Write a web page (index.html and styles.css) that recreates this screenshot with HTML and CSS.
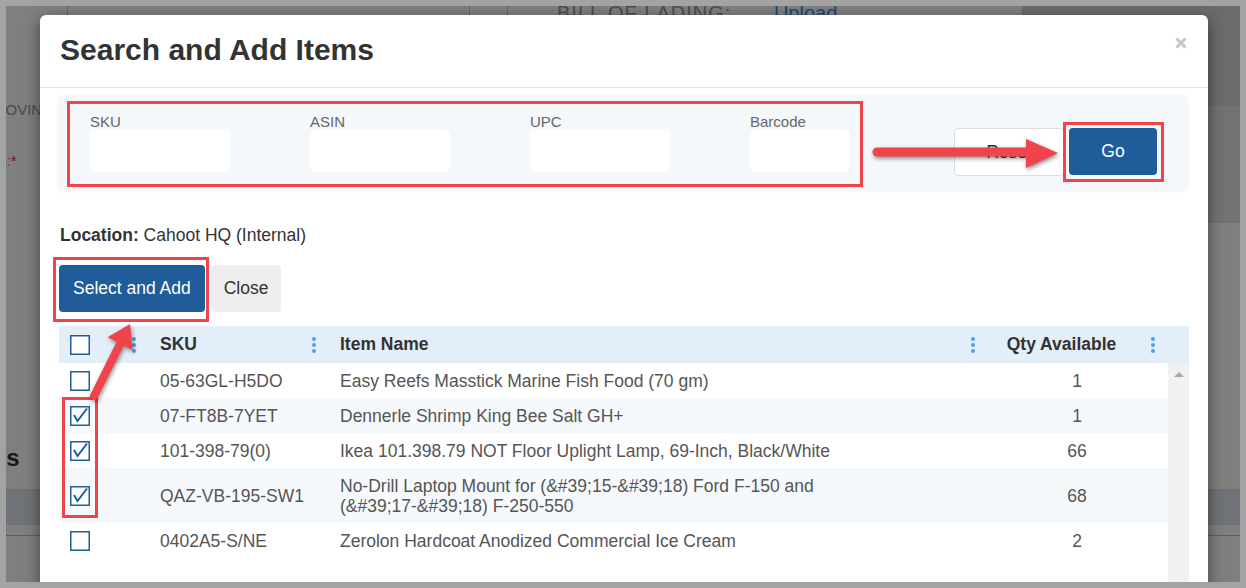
FILE: index.html
```html
<!DOCTYPE html>
<html lang="en">
<head>
    <meta charset="UTF-8">
    <title>Search and Add Items</title>
    <link rel="stylesheet" href="styles.css">
</head>
<body>
    <div class="screen">
        <!-- page behind the dialog -->
        <div class="page">
            <div class="page-top">
                <div class="page-cell w62"></div>
                <div class="page-cell w402"></div>
                <div class="page-cell w38"></div>
                <div class="page-cell bol">
                    <span class="bol-label">BILL OF LADING:</span>
                    <a class="bol-link">Upload</a>
                </div>
                <div class="page-side dark"></div>
            </div>
            <div class="page-section">
                <div class="page-form">
                    <div class="page-label cut-moving">MOVING</div>
                    <div class="page-label cut-date">Date:<span class="req">*</span></div>
                </div>
                <div class="page-side mid"></div>
            </div>
            <div class="page-spacer"></div>
            <h2 class="page-heading">Items</h2>
            <div class="page-band"></div>
            <div class="page-line"></div>
        </div>
        <div class="dim"></div>

        <div class="modal">
            <div class="modal-header">
                <h1>Search and Add Items</h1>
                <span class="close-x">
                    <svg width="12" height="12" viewBox="0 0 12 12"><path d="M1.5 1.5 L10.5 10.5 M10.5 1.5 L1.5 10.5" stroke="#c6c6c6" stroke-width="3"/></svg>
                </span>
            </div>

            <div class="modal-body">
                <div class="filters">
                    <div class="filter-fields">
                        <div class="field">
                            <label>SKU</label>
                            <input type="text">
                        </div>
                        <div class="field">
                            <label>ASIN</label>
                            <input type="text">
                        </div>
                        <div class="field">
                            <label>UPC</label>
                            <input type="text">
                        </div>
                        <div class="field">
                            <label>Barcode</label>
                            <input type="text" class="short">
                        </div>
                    </div>
                    <div class="filter-actions">
                        <button class="btn btn-reset">Reset</button>
                        <button class="btn btn-primary btn-go">Go</button>
                    </div>
                </div>

                <p class="location"><b>Location:</b> Cahoot HQ (Internal)</p>

                <div class="actions">
                    <button class="btn btn-primary btn-add">Select and Add</button>
                    <button class="btn btn-light">Close</button>
                </div>

                <div class="grid">
                    <div class="grid-head">
                        <div class="hcell hcell-check">
                            <span class="checkbox"><svg width="20" height="20" viewBox="0 0 20 20"><rect x="0.75" y="0.75" width="18.5" height="18.5" fill="#fff" stroke="#1f5c99" stroke-width="1.5"/></svg></span>
                            <svg class="kebab" width="4" height="16" viewBox="0 0 4 16"><circle cx="2" cy="2" r="2"/><circle cx="2" cy="8" r="2"/><circle cx="2" cy="14" r="2"/></svg>
                        </div>
                        <div class="hcell hcell-sku">
                            <span>SKU</span>
                            <svg class="kebab" width="4" height="16" viewBox="0 0 4 16"><circle cx="2" cy="2" r="2"/><circle cx="2" cy="8" r="2"/><circle cx="2" cy="14" r="2"/></svg>
                        </div>
                        <div class="hcell hcell-name">
                            <span>Item Name</span>
                            <svg class="kebab" width="4" height="16" viewBox="0 0 4 16"><circle cx="2" cy="2" r="2"/><circle cx="2" cy="8" r="2"/><circle cx="2" cy="14" r="2"/></svg>
                        </div>
                        <div class="hcell hcell-qty">
                            <span class="qty-title">Qty Available</span>
                            <svg class="kebab" width="4" height="16" viewBox="0 0 4 16"><circle cx="2" cy="2" r="2"/><circle cx="2" cy="8" r="2"/><circle cx="2" cy="14" r="2"/></svg>
                        </div>
                        <div></div>
                    </div>

                    <div class="grid-body">
                        <div class="grid-rows" id="rows"></div>
                        <div class="scrollbar"><span class="scroll-up"></span></div>
                    </div>
                </div>
            </div>
        </div>

        <!-- red callouts drawn on the screenshot -->
        <svg class="marks" width="1234" height="576" viewBox="6 6 1234 576">
            <g fill="none" stroke="#f0444a" stroke-width="3">
                <rect x="68.5" y="102.5" width="793" height="83"/>
                <rect x="1064.5" y="123.5" width="98" height="57"/>
                <rect x="54.5" y="258.5" width="153" height="62"/>
                <rect x="63.5" y="398.5" width="33" height="118"/>
            </g>
            <g class="arrow">
                <line x1="877" y1="152" x2="1030" y2="152" stroke="#f0444a" stroke-width="9" stroke-linecap="round"/>
                <polygon points="1026,139 1058,153 1026,168" fill="#f0444a"/>
                <line x1="94" y1="396" x2="120" y2="344" stroke="#f0444a" stroke-width="8" stroke-linecap="round"/>
                <polygon points="107.6,337.3 130,324 132.6,349.9" fill="#f0444a"/>
            </g>
        </svg>
    </div>

    <script>
        const items = [
            { sku: '05-63GL-H5DO', name: 'Easy Reefs Masstick Marine Fish Food (70 gm)', qty: 1, checked: false },
            { sku: '07-FT8B-7YET', name: 'Dennerle Shrimp King Bee Salt GH+', qty: 1, checked: true },
            { sku: '101-398-79(0)', name: 'Ikea 101.398.79 NOT Floor Uplight Lamp, 69-Inch, Black/White', qty: 66, checked: true },
            { sku: 'QAZ-VB-195-SW1', name: 'No-Drill Laptop Mount for (&#39;15-&#39;18) Ford F-150 and (&#39;17-&#39;18) F-250-550', qty: 68, checked: true },
            { sku: '0402A5-S/NE', name: 'Zerolon Hardcoat Anodized Commercial Ice Cream', qty: 2, checked: false }
        ];

        function checkboxSvg(checked) {
            let tick = checked ? '<polyline points="4,9 7.5,15 17,2.5" fill="none" stroke="#1f5c99" stroke-width="2"/>' : '';
            return '<svg width="20" height="20" viewBox="0 0 20 20"><rect x="0.75" y="0.75" width="18.5" height="18.5" fill="#fff" stroke="#1f5c99" stroke-width="1.5"/>' + tick + '</svg>';
        }

        const rows = document.getElementById('rows');
        items.forEach((item, i) => {
            const row = document.createElement('div');
            row.className = 'row' + (i % 2 ? ' alt' : '');

            const c1 = document.createElement('div');
            c1.className = 'cell cell-check';
            c1.innerHTML = '<span class="checkbox">' + checkboxSvg(item.checked) + '</span>';

            const c2 = document.createElement('div');
            c2.className = 'cell cell-sku';
            c2.textContent = item.sku;

            const c3 = document.createElement('div');
            c3.className = 'cell cell-name';
            c3.textContent = item.name;

            const c4 = document.createElement('div');
            c4.className = 'cell cell-qty';
            c4.textContent = item.qty;

            row.append(c1, c2, c3, c4);
            rows.appendChild(row);
        });
    </script>
</body>
</html>
```

FILE: styles.css
```css
* {
    box-sizing: border-box;
}
body {
    margin: 0;
    font-family: "Liberation Sans", Arial, sans-serif;
    color: #333;
}
.screen {
    position: relative;
    width: 1246px;
    height: 588px;
    border: 6px solid #a3a3a3;
    overflow: hidden;
}

/* background page */
.page {
    position: absolute;
    inset: 0;
    background: #fff;
    color: #999;
    font-size: 15px;
}
.page-top {
    display: flex;
    height: 100px;
}
.page-cell {
    border-right: 1px solid #c8c8c8;
}
.w62 { width: 62px; }
.w402 { width: 402px; }
.w38 { width: 38px; }
.bol {
    flex: 1;
    border-right: none;
    padding-left: 49px;
    margin-top: -4px;
    font-size: 20px;
    letter-spacing: 1px;
}
.bol-link {
    margin-left: 36px;
    letter-spacing: 0;
    color: #3b8ee6;
}
.page-side {
    width: 218px;
}
.page-side.dark { background: #d6d6d6; }
.page-side.mid { background: #e6e6e6; }
.page-section {
    display: flex;
    height: 117px;
}
.page-form {
    flex: 1;
}
.page-label {
    color: #999;
    font-size: 15px;
}
.cut-moving {
    margin-top: -5px;
    margin-left: -13px;
}
.cut-date {
    margin-top: 34px;
    margin-left: -31px;
}
.req { color: #d33; }
.page-spacer { height: 221px; }
.page-heading {
    margin: 0 0 17px -49px;
    font-size: 24px;
    line-height: 28px;
    color: #333;
}
.page-band {
    height: 36px;
    background: #dfe6ee;
}
.page-line {
    margin-top: 10px;
    border-top: 1px solid #bbb;
}
.dim {
    position: absolute;
    inset: 0;
    background: rgba(0, 0, 0, 0.5);
}

/* dialog */
.modal {
    position: absolute;
    left: 34px;
    top: 9px;
    width: 1168px;
    height: 600px;
    background: #fff;
    border-radius: 6px;
    box-shadow: 0 5px 15px rgba(0, 0, 0, 0.5);
}
.modal-header {
    display: flex;
    justify-content: space-between;
    align-items: flex-start;
    padding: 18px 21px 21px 20px;
    border-bottom: 1px solid #e5e5e5;
}
.modal-header h1 {
    margin: 0;
    font-size: 30px;
    line-height: 33px;
    font-weight: bold;
    color: #333;
}
.close-x {
    margin-top: 4px;
    line-height: 0;
}
.modal-body {
    padding: 0 19px;
}

.filters {
    display: flex;
    margin: 7px 1px 0 -1px;
    height: 95px;
    padding: 6px 9px 3px;
    background: #f5f8fb;
    border-radius: 6px;
    box-shadow: 0 1px 4px rgba(0, 0, 0, 0.06);
}
.filter-fields {
    display: flex;
    gap: 80px;
    width: 796px;
    padding: 13px 11px 0 23px;
}
.field label {
    display: block;
    font-size: 15px;
    line-height: 16px;
    color: #666;
}
.field input {
    display: block;
    width: 140px;
    height: 42px;
    border: none;
    border-radius: 5px;
    background: #fff;
}
.field input.short {
    width: 100px;
}
.filter-actions {
    display: flex;
    gap: 5px;
    margin-left: auto;
    padding: 27px 22px 0 0;
    align-items: flex-start;
}

.btn {
    font-family: inherit;
    font-size: 17.5px;
    border-radius: 4px;
    border: none;
    cursor: pointer;
}
.btn-primary {
    background: #1f5c99;
    color: #fff;
}
.btn-reset {
    width: 110px;
    height: 48px;
    background: #fff;
    border: 1px solid #dcdcdc;
    color: #333;
}
.btn-go {
    width: 88px;
    height: 47px;
}
.btn-light {
    background: #eee;
    color: #333;
    padding: 0 13px;
}

.location {
    margin: 35px 0 0;
    padding-left: 1px;
    font-size: 17.5px;
    line-height: 20px;
    color: #333;
}
.actions {
    display: flex;
    gap: 6px;
    height: 47px;
    margin-top: 20px;
}
.btn-add {
    padding: 0 14px;
}

/* grid */
.grid {
    margin-top: 14px;
    font-size: 17.5px;
}
.grid-head {
    display: grid;
    grid-template-columns: 81px 180px 660px 1fr 21px;
    height: 37px;
    background: #e4eef9;
    font-weight: bold;
    color: #333;
}
.hcell {
    display: flex;
    align-items: center;
    justify-content: space-between;
}
.hcell-check { padding: 0 4px 0 11px; }
.hcell-sku { padding: 0 4px 0 20px; }
.hcell-name { padding: 0 5px 0 20px; }
.hcell-qty { padding: 0 13px 0 0; }
.qty-title {
    flex: 1;
    text-align: center;
    padding-right: 8px;
}
.kebab {
    fill: #4aa0f7;
}
.checkbox {
    display: block;
    width: 20px;
    height: 20px;
    line-height: 0;
}

.grid-body {
    display: flex;
    height: 240px;
}
.grid-rows {
    flex: 1;
}
.row {
    display: grid;
    grid-template-columns: 81px 180px 660px 1fr;
    align-items: center;
    padding: 7.5px 0;
    line-height: 20px;
    color: #555;
}
.row.alt {
    background: #f5f9fc;
}
.cell-check { padding-left: 11px; }
.cell-sku { padding-left: 20px; }
.cell-name { padding: 0 120px 0 20px; }
.cell-qty {
    text-align: center;
    padding-left: 6px;
}
.scrollbar {
    width: 21px;
    background: #f1f1f1;
    padding-top: 9px;
}
.scroll-up {
    display: block;
    width: 0;
    height: 0;
    margin: 0 auto;
    border-left: 5px solid transparent;
    border-right: 5px solid transparent;
    border-bottom: 5px solid #a8a8a8;
}

/* callouts */
.marks {
    position: absolute;
    left: 0;
    top: 0;
    pointer-events: none;
}
.arrow {
    filter: drop-shadow(1px 2px 2px rgba(0, 0, 0, 0.45));
}
```
